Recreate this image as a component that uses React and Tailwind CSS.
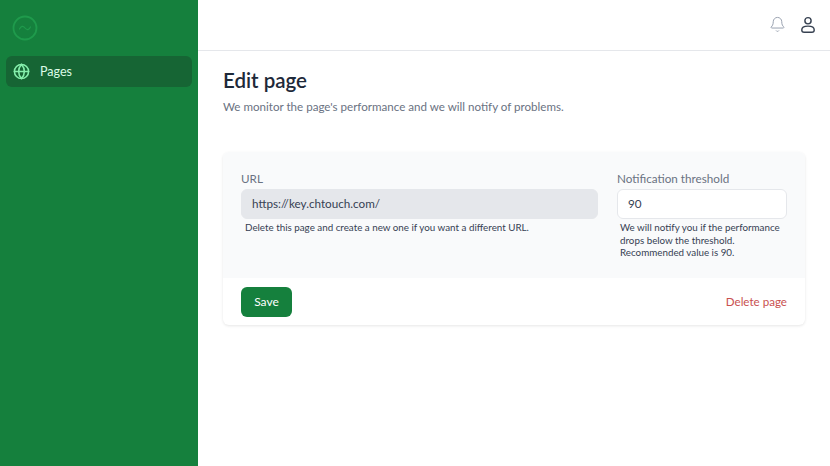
import { Bell, Globe } from 'lucide-react';

function Logo() {
  return (
    <svg width="26" height="26" viewBox="0 0 26 26" fill="none" stroke="#1f9a4c" strokeLinecap="round">
      <circle cx="13" cy="13" r="11.500" strokeWidth="1.8" />
      <path d="M7.500 14c1.500-3 3.500-3.500 5.500-1s4 2 5.500-1" strokeWidth="1.2" />
    </svg>
  );
}

function UserIcon() {
  return (
    <svg width="16" height="18" viewBox="0 0 18 20" fill="none" stroke="#374151" strokeWidth="1.6">
      <circle cx="9" cy="5.200" r="3.500" />
      <path d="M2 15.500c0-2.600 2.800-4.200 7-4.200s7 1.600 7 4.200c0 1.700-1 2.600-2.600 2.600H4.600C3 18.100 2 17.200 2 15.500z" />
    </svg>
  );
}

export default function App() {
  return (
    <div className="flex h-[466px] w-[830px] overflow-hidden bg-white font-['Lato','Open_Sans',sans-serif] text-gray-700">
      {/* sidebar */}
      <aside className="w-[198px] shrink-0 bg-[#15803d] px-[6px]">
        <div className="flex h-[56px] items-center pl-[6px]">
          <Logo />
        </div>
        <div className="flex h-[31px] items-center gap-[10px] rounded-md bg-[#166534] pl-[7px] text-[12.500px] text-[#dcfce7]">
          <Globe size={17} strokeWidth={2.2} className="text-[#86efac]" />
          <span className="pt-[1px]">Pages</span>
        </div>
      </aside>

      <div className="flex min-w-0 flex-1 flex-col">
        {/* top bar */}
        <header className="flex h-[51px] shrink-0 items-center justify-end gap-[14px] border-b border-gray-200 pr-[14px] pb-[1px]">
          <Bell size={17} strokeWidth={1.4} className="text-gray-400" />
          <UserIcon />
        </header>

        <main className="px-[25px]">
          <h1 className="mt-[16px] text-[20.500px] leading-[26px] font-semibold text-gray-800">Edit page</h1>
          <p className="mt-[5px] text-[11.600px] leading-[18px] text-gray-500">
            We monitor the page's performance and we will notify of problems.
          </p>

          <section className="mt-[36px] w-[582px] overflow-hidden rounded-md bg-white shadow-[0_1px_3px_rgba(0,0,0,0.1)]">
            <div className="flex h-[126px] gap-[19px] bg-gray-50 px-[18px] pt-[18px]">
              <div className="w-[357px]">
                <label className="block text-[11.700px] leading-[17px] text-gray-500">URL</label>
                <div className="mt-[2px] flex h-[30px] items-center rounded-md border border-gray-200 bg-gray-200 pl-[10px] text-[11.700px] text-gray-700">
                  https://key.chtouch.com/
                </div>
                <p className="mt-[2px] pl-[4px] text-[9.800px] leading-[13px] text-gray-700">
                  Delete this page and create a new one if you want a different URL.
                </p>
              </div>
              <div className="w-[170px]">
                <label className="block text-[11.700px] leading-[17px] text-gray-500">Notification threshold</label>
                <div className="mt-[2px] flex h-[30px] items-center rounded-md border border-gray-200 bg-white pl-[10px] text-[11.700px] text-gray-700">
                  90
                </div>
                <p className="mt-[2px] pl-[3px] text-[9.800px] leading-[12.500px] text-gray-700">
                  We will notify you if the performance drops below the threshold. Recommended value is 90.
                </p>
              </div>
            </div>
            <div className="flex h-[47px] items-center justify-between px-[18px]">
              <button className="h-[30px] w-[51px] rounded-md bg-[#15803d] text-[12px] text-white">Save</button>
              <a className="text-[11.600px] text-[#c9504f]">Delete page</a>
            </div>
          </section>
        </main>
      </div>
    </div>
  );
}
